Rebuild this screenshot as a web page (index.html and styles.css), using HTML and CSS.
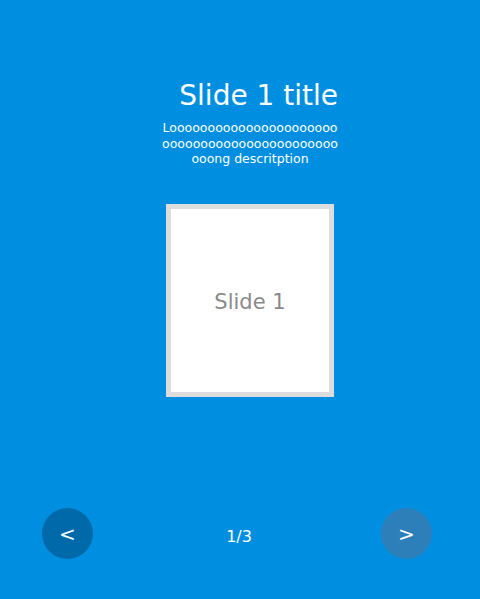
FILE: index.html
```html
<!DOCTYPE html>
<html>
<head>
<meta charset="utf-8">
<link rel="stylesheet" href="styles.css">
</head>
<body>
<div class="slider">
  <div class="slide">
    <div class="head">
      <h1 class="title">Slide 1 title</h1>
      <p class="desc">Loooooooooooooooooooooooooooooooooooooooooooooooong descritption</p>
    </div>
    <div class="card"><span class="label">Slide 1</span></div>
  </div>
  <div class="nav">
    <button class="btn prev">&lt;</button>
    <span class="count">1/3</span>
    <button class="btn next">&gt;</button>
  </div>
</div>
</body>
</html>
```
FILE: styles.css
```css
html, body {
  margin: 0;
  padding: 0;
}
body {
  background: #008fe0;
  font-family: "DejaVu Sans", sans-serif;
  color: #fff;
  width: 480px;
  height: 599px;
  overflow: hidden;
}
.slider {
  height: 599px;
  display: flex;
  flex-direction: column;
}
.slide {
  flex: 1;
  display: flex;
  flex-direction: column;
  align-items: center;
  padding-top: 79px;
  padding-left: 20px;
}
.head {
  width: 176px;
  text-align: center;
}
.title {
  margin: 0;
  font-size: 28px;
  font-weight: normal;
  line-height: 34px;
  text-align: right;
  white-space: nowrap;
}
.desc {
  margin: 7px 0 0;
  font-size: 12.5px;
  line-height: 15.5px;
  word-break: break-all;
}
.card {
  margin-top: 37px;
  width: 158px;
  height: 183px;
  border: 5px solid #dddddd;
  background: #fff;
  display: flex;
  align-items: center;
  justify-content: center;
  color: #8a8a8a;
  font-size: 21px;
}
.label {
  padding-top: 4px;
}
.nav {
  display: flex;
  align-items: center;
  justify-content: space-between;
  padding: 0 48px 40px 42px;
}
.btn {
  width: 51px;
  height: 51px;
  border-radius: 50%;
  border: none;
  color: #fff;
  font-family: "DejaVu Sans", sans-serif;
  font-size: 20px;
  padding: 0;
}
.prev {
  background: #0069a9;
}
.next {
  background: #2c7fb8;
}
.count {
  font-size: 16px;
  margin-left: 4px;
  padding-top: 6px;
}
```
